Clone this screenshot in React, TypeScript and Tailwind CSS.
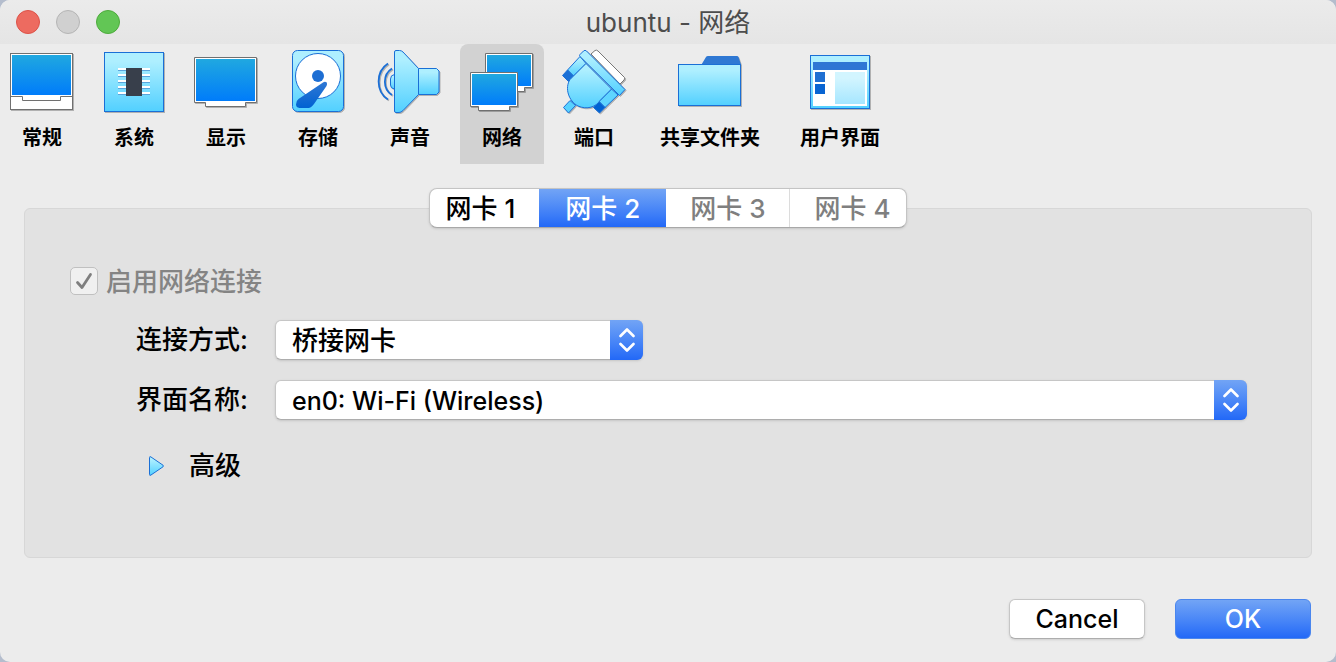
import { useState, type ReactNode } from "react";

const BLUE = "#1a6fd6";

function Defs() {
  return (
    <svg width="0" height="0" className="absolute" aria-hidden="true">
      <defs>
        <linearGradient id="screen" x1="0" y1="0" x2="0" y2="1">
          <stop offset="0" stopColor="#20a8e0" />
          <stop offset="1" stopColor="#007cfa" />
        </linearGradient>
        <linearGradient id="ice" x1="0" y1="0" x2="0" y2="1">
          <stop offset="0.15" stopColor="#aeefff" />
          <stop offset="1" stopColor="#52d0ff" />
        </linearGradient>
        <linearGradient id="pale" x1="0" y1="0" x2="0" y2="1">
          <stop offset="0.2" stopColor="#d2f5ff" />
          <stop offset="1" stopColor="#a6e6ff" />
        </linearGradient>
        <linearGradient id="deep" x1="0" y1="0" x2="0" y2="1">
          <stop offset="0" stopColor="#3078d4" />
          <stop offset="1" stopColor="#0062d2" />
        </linearGradient>
      </defs>
    </svg>
  );
}

function Icon({ children }: { children: ReactNode }) {
  return (
    <svg width="68" height="68" viewBox="0 0 68 68" fill="none" aria-hidden="true" className="drop-shadow-[1px_1px_0_#00000040]">
      {children}
    </svg>
  );
}

const GeneralIcon = () => (
  <Icon>
    <rect x="2.5" y="5.5" width="62" height="56" fill="#fff" stroke="#707070" />
    <rect x="4" y="7" width="59" height="40" fill="url(#screen)" />
    <path d="M2.5 48.5H14.5V52.5H52.5V48.5H64.5" stroke="#707070" />
  </Icon>
);

const SystemIcon = () => (
  <Icon>
    <rect x="4.5" y="4.5" width="59" height="59" fill="url(#ice)" stroke={BLUE} />
    {[20, 26, 32, 38, 44].map((y) => (
      <g key={y}>
        <rect x="18" y={y} width="32" height="2" fill="#fff" />
        <rect x="18" y={y + 2} width="32" height="1" fill="#5aa5dc" />
      </g>
    ))}
    <rect x="26" y="20" width="16" height="28" fill="#383f4b" />
  </Icon>
);

const DisplayIcon = () => (
  <Icon>
    <path d="M2.5 9.5H64.5V54.5H53.5V58.5H13.5V54.5H2.5Z" fill="#fff" stroke="#707070" />
    <rect x="4" y="11" width="59" height="42" fill="url(#screen)" />
  </Icon>
);

const StorageIcon = () => (
  <Icon>
    <rect x="8.5" y="2.5" width="51" height="61" rx="5" fill="url(#ice)" stroke={BLUE} />
    <circle cx="34" cy="28" r="22.5" fill="#fff" stroke={BLUE} />
    <circle cx="34" cy="28" r="6" fill="#1d6ed3" />
    <path d="M39 34.5Q41 33 42.800 34.500Q43.500 36 42.500 38L30 56Q27 60 24.500 60H15.500Q12 59.500 12 56.500Q11.800 53 14.500 51Z" fill="url(#deep)" />
  </Icon>
);

const AudioIcon = () => (
  <Icon>
    <path d="M18.500 26.500Q14.500 27 14.500 31V37Q14.500 40.500 18.500 41" fill="url(#ice)" stroke={BLUE} />
    <path d="M42.500 20.500H60.500L63 23V44L60.500 46.500H42.500Z" fill="url(#ice)" stroke={BLUE} strokeLinejoin="round" />
    <path d="M18.500 4Q18.500 2.500 20 2.500H23.500Q25.500 2.500 27 4L42.500 20.500V46.500L27 62.500Q25 64.500 23 64.500H20Q18.500 64.500 18.500 63Z" fill="url(#ice)" stroke={BLUE} />
    <path d="M16 20.500C6.500 26.500 6.500 41 16 47M12 15.500C-0.500 23.500 -0.500 43.500 12 51.500" stroke={BLUE} strokeWidth="1.800" />
  </Icon>
);

const NetworkIcon = () => (
  <Icon>
    <path d="M17.500 5.500H64.500V39.500H56.500V43.500H26.500V39.500H17.500Z" fill="#fff" stroke="#707070" />
    <rect x="19" y="7" width="44" height="31" fill="url(#screen)" />
    <path d="M2.500 24.500H49.500V58.500H41.500V62.500H10.500V58.500H2.500Z" fill="#fff" stroke="#707070" />
    <rect x="4" y="26" width="44" height="31" fill="url(#screen)" />
  </Icon>
);

const PortsIcon = () => (
  <Icon>
    <path d="M31 6L35 2.500Q36.500 1.500 38 3L64.500 29.500Q65 31 64 32L60 36Z" fill="#fff" stroke="#777" />
    <g stroke={BLUE} strokeLinejoin="round">
      <path d="M20 8.500L26 15.500L13.500 28L7.500 22Z" fill="url(#ice)" />
      <path d="M7.500 22L13.500 28L8.500 33.500L2.500 27.500Z" fill="#1a6fd6" />
      <path d="M51.500 41L58 47L45 59.500L39 53.500Z" fill="#5fd5ff" />
      <path d="M39 53.500L45 59.500L39.500 65L33.500 59.500Z" fill="#0062d2" />
      <path d="M10 52.500L15.500 57.500L8.500 65L3.500 59.500Z" fill="#58d2ff" />
      <path d="M26 15.500L10 31.500C4.500 40 8.500 53 18 58C27 62 36 59 40 52.500L51.500 41Z" fill="url(#ice)" />
      <path d="M23.500 3Q25 1.500 26.500 3L65 41.500L59.500 47.500L20 8.500Q19 7.500 20 6.500Z" fill="url(#ice)" />
    </g>
  </Icon>
);

const FolderIcon = () => (
  <Icon>
    <path d="M25.500 16.500L30 9Q30.500 8 32 8H61Q62 8 62.500 9L65 16.500Z" fill="#2f78d3" />
    <rect x="2.500" y="16.500" width="62" height="41" fill="url(#ice)" stroke={BLUE} />
  </Icon>
);

const InterfaceIcon = () => (
  <Icon>
    <rect x="4.500" y="7.500" width="59" height="53" fill="url(#ice)" stroke={BLUE} />
    <rect x="7" y="14" width="54" height="44" fill="#fff" />
    <rect x="7" y="14" width="54" height="8" fill="#2f76d4" />
    <rect x="9" y="24" width="10" height="10" fill="#1f6fd2" />
    <rect x="9" y="36" width="10" height="10" fill="#0864d2" />
    <rect x="29" y="24" width="30" height="32" fill="url(#pale)" />
  </Icon>
);

const SECTIONS = [
  { name: "常规", Art: GeneralIcon },
  { name: "系统", Art: SystemIcon },
  { name: "显示", Art: DisplayIcon },
  { name: "存储", Art: StorageIcon },
  { name: "声音", Art: AudioIcon },
  { name: "网络", Art: NetworkIcon },
  { name: "端口", Art: PortsIcon },
  { name: "共享文件夹", Art: FolderIcon },
  { name: "用户界面", Art: InterfaceIcon },
];

const ADAPTERS = [
  { name: "网卡 1", enabled: true, pad: "pl-4 pr-6" },
  { name: "网卡 2", enabled: true, pad: "px-[26px]" },
  { name: "网卡 3", enabled: false, pad: "px-6" },
  { name: "网卡 4", enabled: false, pad: "pl-6 pr-4 border-l border-[#dcdcdc]" },
];

function PopUp({ id, options, className }: { id: string; options: string[]; className: string }) {
  return (
    <div className={`relative h-10 ${className}`}>
      <select
        id={id}
        className="h-10 w-full appearance-none rounded-md border border-[#c6c6c6] border-b-[#adadad] bg-white pr-10 pb-0.5 pl-4 text-black shadow-sm"
      >
        {options.map((o) => (
          <option key={o}>{o}</option>
        ))}
      </select>
      <span className="pointer-events-none absolute inset-y-0 right-0 flex w-[33px] items-center justify-center rounded-r-md bg-linear-to-b from-[#72a4f5] to-[#2268f7]">
        <svg width="16" height="26" viewBox="0 0 16 26" fill="none" stroke="#fff" strokeWidth="2.600" strokeLinecap="round" strokeLinejoin="round" aria-hidden="true">
          <path d="M1.500 9L8 2.500L14.500 9M1.500 17L8 23.500L14.500 17" />
        </svg>
      </span>
    </div>
  );
}

export default function App() {
  const [section, setSection] = useState("网络");
  const [adapter, setAdapter] = useState("网卡 2");
  return (
    <div className="min-h-screen bg-[#b4bdcd]">
      <Defs />
      <main className="flex min-h-screen flex-col rounded-[10px] bg-[#ececec] font-['Inter','Noto_Sans_CJK_SC',sans-serif] text-[26px] leading-10 font-medium text-black">
        <header className="grid h-11 grid-cols-[1fr_auto_1fr] items-center rounded-t-[10px] bg-linear-to-b from-[#ebebeb] to-[#e5e5e5] px-4">
          <div className="flex gap-4">
            <button aria-label="关闭" className="size-6 rounded-full border border-[#dd5248] bg-[#ed6b60]" />
            <button aria-label="最小化" className="size-6 rounded-full border border-[#b5b5b5] bg-[#d0d0d0]" />
            <button aria-label="缩放" className="size-6 rounded-full border border-[#4dab3c] bg-[#62c655]" />
          </div>
          <h1 className="pt-0.5 font-normal text-[#4d4d4d]">ubuntu - 网络</h1>
        </header>

        <nav className="flex gap-2">
          {SECTIONS.map(({ name, Art }) => (
            <button
              key={name}
              aria-pressed={section === name}
              onClick={() => setSection(name)}
              className={`flex h-[120px] min-w-[84px] flex-col items-center rounded-t-lg px-2 pt-1 text-xl leading-7 font-bold ${section === name ? "bg-[#d2d2d2]" : ""}`}
            >
              <Art />
              <span className="mt-2 px-2">{name}</span>
            </button>
          ))}
        </nav>

        <div role="tablist" className="relative z-10 mx-auto mt-6 -mb-5 flex h-10 overflow-hidden rounded-lg border border-[#c4c4c4] border-b-[#a8a8a8] bg-white shadow-sm">
          {ADAPTERS.map(({ name, enabled, pad }) => (
            <button
              key={name}
              role="tab"
              disabled={!enabled}
              aria-selected={adapter === name}
              onClick={() => setAdapter(name)}
              className={`${pad} ${adapter === name ? "bg-linear-to-b from-[#72a4f5] to-[#2268f7] text-white" : enabled ? "" : "text-[#7f7f7f]"}`}
            >
              {name}
            </button>
          ))}
        </div>

        <section className="mx-6 flex-1 rounded-md border border-[#d7d7d7] bg-[#e2e2e2] pt-[51px] pr-16 pb-[70px] pl-[45px]">
          <label className="flex items-center gap-2 text-[#848484]">
            <span className="relative flex size-7">
              <input type="checkbox" defaultChecked disabled className="size-7 appearance-none rounded-[5px] border border-[#c0c0c0] bg-[#f0f0f0]" />
              <svg width="28" height="28" viewBox="0 0 28 28" fill="none" stroke="#7f7f7f" strokeWidth="2.800" strokeLinecap="round" strokeLinejoin="round" className="absolute inset-0" aria-hidden="true">
                <path d="M7.500 15.500L12 20.500L20.500 7.500" />
              </svg>
            </span>
            <span className="pt-0.5">启用网络连接</span>
          </label>
          <div className="mt-[18px] grid grid-cols-[178px_1fr] gap-x-[27px] gap-y-5">
            <label htmlFor="attached" className="text-right">连接方式:</label>
            <PopUp id="attached" className="w-[368px]" options={["桥接网卡"]} />
            <label htmlFor="adapter-name" className="text-right">界面名称:</label>
            <PopUp id="adapter-name" className="w-full text-[25px]" options={["en0: Wi-Fi (Wireless)"]} />
          </div>
          <button className="mt-[26px] ml-[78px] flex items-center gap-6">
            <svg width="17" height="20" viewBox="0 0 17 20" aria-hidden="true">
              <path d="M1.500 1.500Q1.500 0 3 1L15 9.200Q16 10 15 10.800L3 19Q1.500 20 1.500 18.500Z" fill="url(#ice)" stroke={BLUE} />
            </svg>
            高级
          </button>
        </section>

        <footer className="mt-[41px] mb-[23px] flex justify-end gap-[30px] pr-[25px] text-[25px]">
          <button className="flex h-10 w-[136px] items-center justify-center rounded-md border border-[#c6c6c6] border-b-[#adadad] bg-white shadow-sm">Cancel</button>
          <button className="flex h-10 w-[136px] items-center justify-center rounded-md border border-[#4a86ee] bg-linear-to-b from-[#72a4f5] to-[#2268f7] text-white">OK</button>
        </footer>
      </main>
    </div>
  );
}
